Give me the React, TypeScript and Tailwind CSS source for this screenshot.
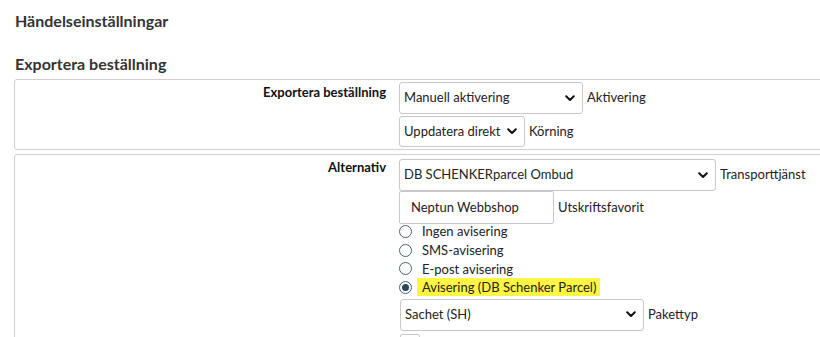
import React from "react";

function Chevron() {
  return (
    <svg width="10" height="7" viewBox="0 0 10 7" className="shrink-0">
      <path d="M1.2 1.2 L5 5 L8.8 1.2" fill="none" stroke="#111" strokeWidth="2" strokeLinecap="round" strokeLinejoin="round" />
    </svg>
  );
}

function Select({ value, width, height = "h-[32px]" }: { value: string; width: string; height?: string }) {
  return (
    <div className={`${width} ${height} flex items-center justify-between whitespace-nowrap border border-[#c8c8c8] rounded-[3px] pl-[4px] pr-[7px] text-[13px] text-[#222] bg-white`}>
      <span>{value}</span>
      <Chevron />
    </div>
  );
}

function Radio({ label, checked, highlight }: { label: string; checked?: boolean; highlight?: boolean }) {
  return (
    <div className="flex items-center h-[18.7px]">
      <span className="w-[13px] h-[13px] rounded-full border border-[#4a6272] flex items-center justify-center bg-white">
        {checked && <span className="w-[7px] h-[7px] rounded-full bg-[#244a5e]" />}
      </span>
      <span className={`ml-[5px] pl-[5px] pr-[4px] text-[13px] leading-[18px] text-[#222] ${highlight ? "bg-[#fff543]" : ""}`}>{label}</span>
    </div>
  );
}

export default function App() {
  return (
    <div className="w-[820px] h-[337px] overflow-hidden bg-white font-['Lato','Liberation_Sans',sans-serif] text-[#333]">
      <h3 className="pl-[15px] pt-[11px] text-[16px] leading-[20px] font-bold text-[#333]">Händelseinställningar</h3>
      <h2 className="pl-[15px] mt-[22px] text-[16px] leading-[22px] font-bold text-[#333]">Exportera beställning</h2>

      {/* Exportera beställning */}
      <div className="ml-[14px] mt-[4px] w-[820px] h-[71px] border border-[#d0d0d0] rounded-[3px] flex">
        <div className="w-[384px] pr-[13px] pt-[3px] text-right text-[13px] font-bold text-[#111]">Exportera beställning</div>
        <div className="pt-[2px] flex flex-col gap-[2px]">
          <div className="flex items-center gap-[4px]">
            <Select value="Manuell aktivering" width="w-[184px]" />
            <span className="text-[13px] text-[#222]">Aktivering</span>
          </div>
          <div className="flex items-center gap-[4px]">
            <Select value="Uppdatera direkt" width="w-[126px]" height="h-[31px]" />
            <span className="text-[13px] text-[#222]">Körning</span>
          </div>
        </div>
      </div>

      {/* Alternativ */}
      <div className="ml-[14px] mt-[4px] w-[820px] h-[200px] border border-[#d0d0d0] rounded-[3px] flex">
        <div className="w-[384px] pr-[13px] pt-[3px] text-right text-[13px] font-bold text-[#111]">Alternativ</div>
        <div className="pt-[4px] flex flex-col">
          <div className="flex items-center gap-[4px]">
            <Select value="DB SCHENKERparcel Ombud" width="w-[317px]" height="h-[32px]" />
            <span className="text-[13px] text-[#222]">Transporttjänst</span>
          </div>
          <div className="flex items-center gap-[4px]">
            <div className="w-[155px] h-[33px] border border-[#c8c8c8] rounded-[2px] pl-[11px] flex items-center text-[13px] text-[#222]">Neptun Webbshop</div>
            <span className="text-[13px] text-[#222]">Utskriftsfavorit</span>
          </div>
          <div className="-mt-[2px]">
            <Radio label="Ingen avisering" />
            <Radio label="SMS-avisering" />
            <Radio label="E-post avisering" />
            <Radio label="Avisering (DB Schenker Parcel)" checked highlight />
          </div>
          <div className="mt-[2px] ml-px flex items-center gap-[4px]">
            <Select value="Sachet (SH)" width="w-[244px]" height="h-[32px]" />
            <span className="text-[13px] text-[#222]">Pakettyp</span>
          </div>
          <div className="mt-[3px] ml-px w-[20px] h-[20px] border border-[#c8c8c8] rounded-[2px]" />
        </div>
      </div>
    </div>
  );
}
